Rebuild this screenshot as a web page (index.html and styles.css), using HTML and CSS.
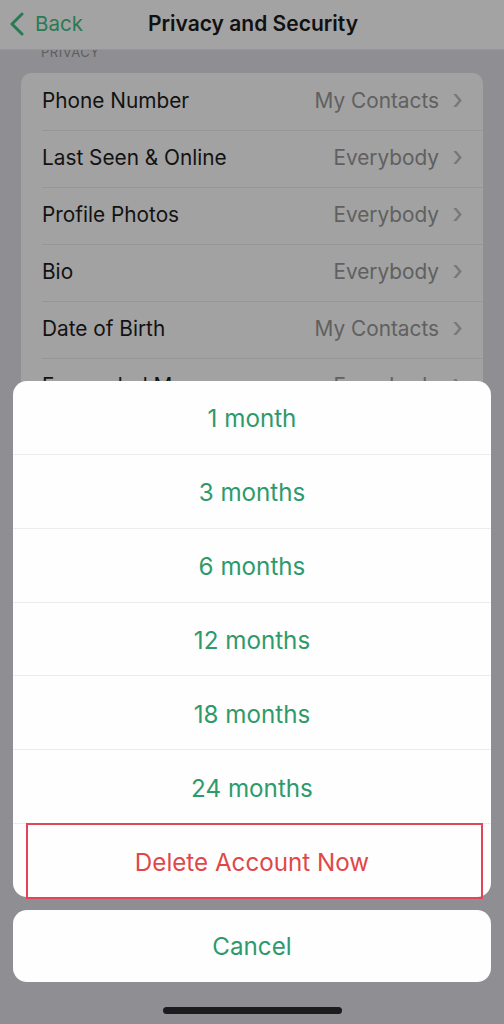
FILE: index.html
```html
<!DOCTYPE html>
<html lang="en">
<head>
    <meta charset="UTF-8">
    <meta name="viewport" content="width=device-width, initial-scale=1.0">
    <title>Privacy and Security</title>
    <link rel="stylesheet" href="styles.css">
</head>
<body>
    <div class="screen">
        <div class="nav">
            <div class="back">
                <svg class="back-icon" width="16" height="24" viewBox="0 0 16 24">
                    <path d="M13 2 L3 12 L13 22" fill="none" stroke="currentColor" stroke-width="3" stroke-linecap="round" stroke-linejoin="round"/>
                </svg>
                <span>Back</span>
            </div>
            <div class="title">Privacy and Security</div>
        </div>

        <div class="content">
            <div class="section-header">PRIVACY</div>
            <div class="card">
                <div class="row"><span class="label">Phone Number</span><span class="value">My Contacts</span><span class="chevron">&#x203A;</span></div>
                <div class="row"><span class="label">Last Seen &amp; Online</span><span class="value">Everybody</span><span class="chevron">&#x203A;</span></div>
                <div class="row"><span class="label">Profile Photos</span><span class="value">Everybody</span><span class="chevron">&#x203A;</span></div>
                <div class="row"><span class="label">Bio</span><span class="value">Everybody</span><span class="chevron">&#x203A;</span></div>
                <div class="row"><span class="label">Date of Birth</span><span class="value">My Contacts</span><span class="chevron">&#x203A;</span></div>
                <div class="row"><span class="label">Forwarded Messages</span><span class="value">Everybody</span><span class="chevron">&#x203A;</span></div>
                <div class="row"><span class="label">Calls</span><span class="value">Everybody</span><span class="chevron">&#x203A;</span></div>
            </div>
        </div>

        <!-- action sheet over the list -->
        <div class="sheet">
            <div class="option">1 month</div>
            <div class="option">3 months</div>
            <div class="option">6 months</div>
            <div class="option">12 months</div>
            <div class="option">18 months</div>
            <div class="option">24 months</div>
            <div class="option danger">Delete Account Now</div>
        </div>
        <div class="highlight"></div>
        <div class="cancel">Cancel</div>
        <div class="home-bar"></div>
    </div>
</body>
</html>
```

FILE: styles.css
```css
body {
    margin: 0;
    font-family: Inter, "Liberation Sans", Arial, sans-serif;
    background-color: #8e8e93;
}
.screen {
    position: relative;
    width: 504px;
    height: 1024px;
    overflow: hidden;
    background: #8e8e93;
}
.nav {
    position: relative;
    height: 49px;
    background: #a3a3a3;
    border-bottom: 1px solid #979797;
    display: flex;
    align-items: center;
    justify-content: center;
    z-index: 2;
}
.back {
    position: absolute;
    left: 9px;
    top: 11px;
    display: flex;
    align-items: center;
    gap: 10px;
    color: #2a7a55;
    font-size: 20.5px;
}
.back-icon {
    display: block;
}
.title {
    font-size: 21px;
    font-weight: 600;
    color: #111;
    margin-left: 2px;
    margin-top: -2px;
}
.content {
    position: relative;
    z-index: 1;
}
.section-header {
    margin-top: -6px;
    padding-left: 41px;
    height: 29px;
    font-size: 13px;
    color: #5e5e5e;
    letter-spacing: 0.5px;
}
.card {
    margin: 0 21px;
    background: #a2a2a2;
    border-radius: 10px;
    overflow: hidden;
}
.row {
    height: 57px;
    display: flex;
    align-items: center;
    padding: 0 20px 3px 21px;
    box-sizing: border-box;
    position: relative;
}
.row + .row::before {
    content: "";
    position: absolute;
    left: 21px;
    right: 0;
    top: 0;
    border-top: 1px solid #969696;
}
.label {
    flex: 1;
    font-size: 20.8px;
    color: #121212;
}
.value {
    font-size: 20.8px;
    color: #606060;
}
.chevron {
    width: 24px;
    text-align: right;
    font-size: 28px;
    color: #777;
    line-height: 1;
    margin-top: -3px;
}
.sheet {
    position: absolute;
    left: 13px;
    right: 13px;
    top: 381px;
    height: 516px;
    background: #fefefe;
    border-radius: 14px;
    overflow: hidden;
    z-index: 3;
    display: flex;
    flex-direction: column;
}
.option {
    flex: 1;
    display: flex;
    align-items: center;
    justify-content: center;
    padding-top: 3px;
    font-size: 24.2px;
    color: #2e9a6b;
    border-bottom: 1px solid #ececec;
}
.option.danger {
    color: #e04848;
    border-bottom: none;
}
.highlight {
    position: absolute;
    left: 26px;
    top: 823px;
    width: 453px;
    height: 72px;
    border: 2px solid #e0455a;
    z-index: 4;
}
.cancel {
    position: absolute;
    left: 13px;
    right: 13px;
    top: 910px;
    height: 72px;
    background: #fefefe;
    border-radius: 14px;
    display: flex;
    align-items: center;
    justify-content: center;
    font-size: 24.2px;
    color: #2e9a6b;
    z-index: 3;
}
.home-bar {
    position: absolute;
    left: 163px;
    top: 1007px;
    width: 179px;
    height: 7px;
    border-radius: 4px;
    background: #1c1c1e;
    z-index: 3;
}
```
